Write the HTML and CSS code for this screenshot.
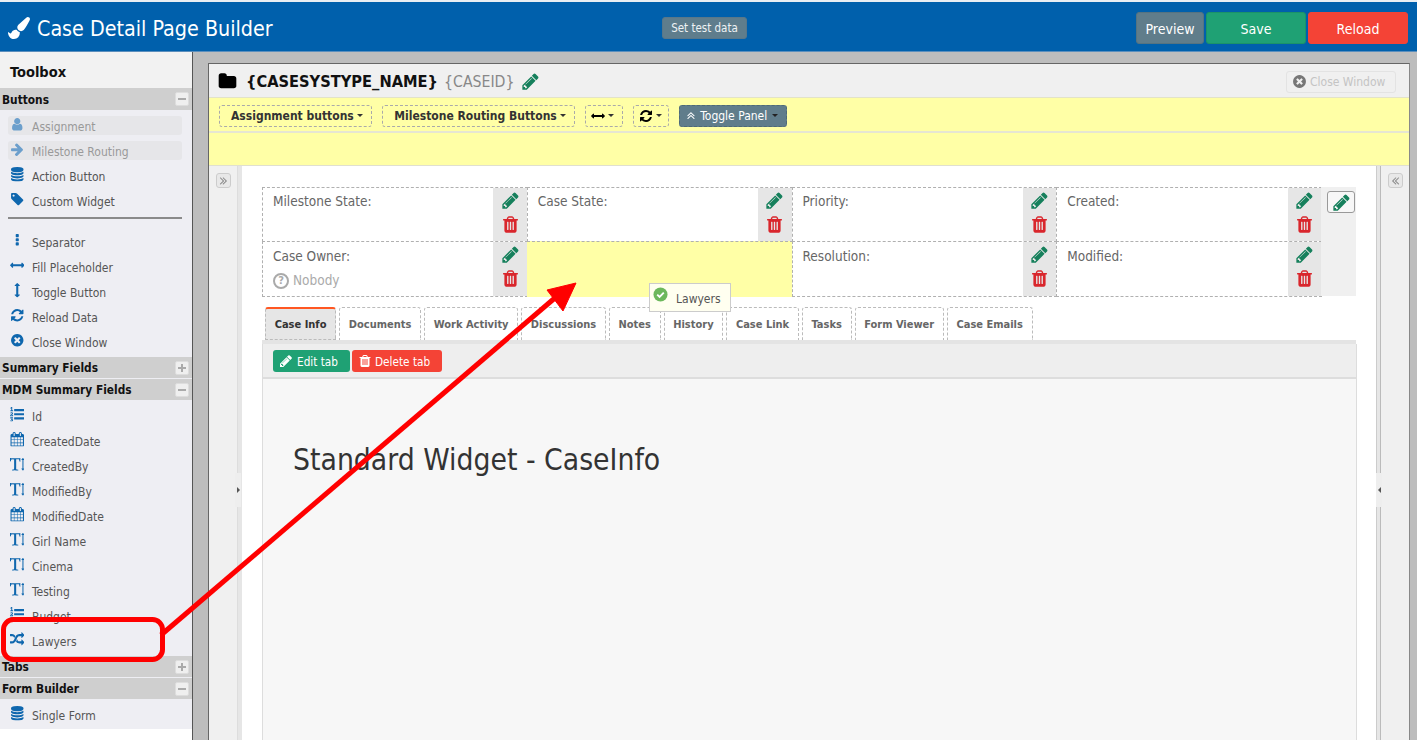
FILE: index.html
```html
<!DOCTYPE html>
<html lang="en">
<head>
<meta charset="utf-8">
<title>Case Detail Page Builder</title>
<link rel="stylesheet" href="styles.css">
</head>
<body>
<svg class="defs" aria-hidden="true">
  <symbol id="i-pencil" viewBox="0 0 1792 1792"><path d="M491 1536l91-91-235-235-91 91v107h128v128h107zm523-928q0-22-22-22-10 0-17 7l-542 542q-7 7-7 17 0 22 22 22 10 0 17-7l542-542q7-7 7-17zm-54-192l416 416-832 832h-416v-416zm683 96q0 53-37 90l-166 166-416-416 166-165q36-38 90-38 53 0 91 38l235 234q37 39 37 91z"/></symbol>
  <symbol id="i-trash" viewBox="0 0 1792 1792"><path d="M704 1376v-704q0-14-9-23t-23-9h-64q-14 0-23 9t-9 23v704q0 14 9 23t23 9h64q14 0 23-9t9-23zm256 0v-704q0-14-9-23t-23-9h-64q-14 0-23 9t-9 23v704q0 14 9 23t23 9h64q14 0 23-9t9-23zm256 0v-704q0-14-9-23t-23-9h-64q-14 0-23 9t-9 23v704q0 14 9 23t23 9h64q14 0 23-9t9-23zm-544-992h448l-48-117q-7-9-17-11h-317q-10 2-17 11zm928 32v64q0 14-9 23t-23 9h-96v948q0 83-47 143.500t-113 60.500h-832q-66 0-113-58.500t-47-141.500v-952h-96q-14 0-23-9t-9-23v-64q0-14 9-23t23-9h309l70-167q15-37 54-63t79-26h320q40 0 79 26t54 63l70 167h309q14 0 23 9t9 23z"/></symbol>
  <symbol id="i-user" viewBox="0 0 1792 1792"><path d="M1536 1399q0 109-62.500 187t-150.500 78h-854q-88 0-150.500-78t-62.500-187q0-85 8.500-160.500t31.500-152 58.500-131 94-89 134.500-34.500q131 128 313 128t313-128q76 0 134.500 34.500t94 89 58.500 131 31.500 152 8.500 160.500zm-256-887q0 159-112.500 271.500t-271.500 112.500-271.500-112.500-112.500-271.500 112.500-271.500 271.500-112.500 271.500 112.500 112.500 271.500z"/></symbol>
  <symbol id="i-arrow" viewBox="0 0 1792 1792"><path d="M1600 960q0 54-37 91l-651 651q-39 37-91 37-51 0-90-37l-75-75q-38-38-38-91t38-91l293-293h-704q-52 0-84.500-37.500t-32.500-90.500v-128q0-53 32.500-90.500t84.500-37.500h704l-293-294q-38-36-38-90t38-90l75-75q38-38 90-38 53 0 91 38l651 651q37 35 37 90z"/></symbol>
  <symbol id="i-db" viewBox="0 0 1792 1792"><path d="M896 768q237 0 443-43t325-127v170q0 69-103 128t-280 93.500-385 34.500-385-34.500-280-93.500-103-128v-170q119 84 325 127t443 43zm0 768q237 0 443-43t325-127v170q0 69-103 128t-280 93.500-385 34.500-385-34.500-280-93.500-103-128v-170q119 84 325 127t443 43zm0-384q237 0 443-43t325-127v170q0 69-103 128t-280 93.500-385 34.500-385-34.500-280-93.500-103-128v-170q119 84 325 127t443 43zm0-1152q208 0 385 34.500t280 93.500 103 128v128q0 69-103 128t-280 93.500-385 34.500-385-34.500-280-93.500-103-128v-128q0-69 103-128t280-93.500 385-34.500z"/></symbol>
  <symbol id="i-tag" viewBox="0 0 1792 1792"><path d="M576 448q0-53-37.500-90.500t-90.500-37.500-90.500 37.500-37.500 90.500 37.500 90.500 90.500 37.500 90.500-37.500 37.500-90.500zm1067 576q0 53-37 90l-491 492q-39 37-91 37-53 0-90-37l-715-716q-38-37-64.500-101t-26.500-117v-416q0-52 38-90t90-38h416q53 0 117 26.500t102 64.500l715 714q37 39 37 91z"/></symbol>
  <symbol id="i-dots" viewBox="0 0 1792 1792"><path d="M1088 1248v192q0 40-28 68t-68 28h-192q-40 0-68-28t-28-68v-192q0-40 28-68t68-28h192q40 0 68 28t28 68zm0-512v192q0 40-28 68t-68 28h-192q-40 0-68-28t-28-68v-192q0-40 28-68t68-28h192q40 0 68 28t28 68zm0-512v192q0 40-28 68t-68 28h-192q-40 0-68-28t-28-68v-192q0-40 28-68t68-28h192q40 0 68 28t28 68z"/></symbol>
  <symbol id="i-h" viewBox="0 0 1792 1792"><path d="M1792 896q0 26-19 45l-256 256q-19 19-45 19t-45-19-19-45v-128h-1024v128q0 26-19 45t-45 19-45-19l-256-256q-19-19-19-45t19-45l256-256q19-19 45-19t45 19 19 45v128h1024v-128q0-26 19-45t45-19 45 19l256 256q19 19 19 45z"/></symbol>
  <symbol id="i-v" viewBox="0 0 1792 1792"><path d="M1216 320q0 26-19 45t-45 19h-128v1024h128q26 0 45 19t19 45-19 45l-256 256q-19 19-45 19t-45-19l-256-256q-19-19-19-45t19-45 45-19h128v-1024h-128q-26 0-45-19t-19-45 19-45l256-256q19-19 45-19t45 19l256 256q19 19 19 45z"/></symbol>
  <symbol id="i-refresh" viewBox="0 0 1792 1792"><path d="M1639 1056q0 5-1 7-64 268-268 434.500t-478 166.500q-146 0-282.500-55t-243.500-157l-129 129q-19 19-45 19t-45-19-19-45v-448q0-26 19-45t45-19h448q26 0 45 19t19 45-19 45l-137 137q71 66 161 102t187 36q134 0 250-65t186-179q11-17 53-117 8-23 30-23h192q13 0 22.500 9.500t9.500 22.500zm25-800v448q0 26-19 45t-45 19h-448q-26 0-45-19t-19-45 19-45l138-138q-148-137-349-137-134 0-250 65t-186 179q-11 17-53 117-8 23-30 23h-199q-13 0-22.500-9.500t-9.500-22.500v-7q65-268 270-434.500t480-166.500q146 0 284 55.500t245 156.500l130-129q19-19 45-19t45 19 19 45z"/></symbol>
  <symbol id="i-close" viewBox="0 0 1792 1792"><path d="M1277 1122q0-26-19-45l-181-181 181-181q19-19 19-45 0-27-19-46l-90-90q-19-19-46-19-26 0-45 19l-181 181-181-181q-19-19-45-19-27 0-46 19l-90 90q-19 19-19 46 0 26 19 45l181 181-181 181q-19 19-19 45 0 27 19 46l90 90q19 19 46 19 26 0 45-19l181-181 181 181q19 19 45 19 27 0 46-19l90-90q19-19 19-46zm387-226q0 209-103 385.500t-279.500 279.500-385.500 103-385.500-103-279.500-279.500-103-385.500 103-385.500 279.500-279.500 385.500-103 385.500 103 279.500 279.500 103 385.500z"/></symbol>
  <symbol id="i-folder" viewBox="0 0 1792 1792"><path d="M1728 608v704q0 92-66 158t-158 66h-1216q-92 0-158-66t-66-158v-960q0-92 66-158t158-66h320q92 0 158 66t66 158v32h672q92 0 158 66t66 158z"/></symbol>
  <symbol id="i-brush" viewBox="0 0 1792 1792"><path d="M1615 0q70 0 122.500 46.500t52.500 116.500q0 63-45 151-332 629-465 752-97 91-218 91-126 0-216.500-92.500t-90.500-219.500q0-128 92-212l638-579q59-54 130-54zm-909 1034q39 76 106.500 130t150.500 76l1 71q4 213-129.500 347t-348.500 134q-123 0-218-46.500t-152.500-127.500-86.500-183-29-220q7 5 41 30t62 44.500 59 36.500 46 17q41 0 55-37 25-66 57.500-112.500t69.500-76 88-47.500 103-25.500 119-12.500z"/></symbol>
  <symbol id="i-random" viewBox="0 0 1792 1792"><path d="M666 481q-60 92-137 273-22-45-37-72.500t-40.500-63.500-51-56.500-63-35-81.500-14.500h-224q-14 0-23-9t-9-23v-192q0-14 9-23t23-9h224q250 0 410 225zm1126 799q0 14-9 23l-320 320q-9 9-23 9-13 0-22.500-9.500t-9.500-22.500v-192q-32 0-85 .5t-81 1-73-1-71-5-64-10.500-63-18.500-58-28.500-59-40-55-53.500-56-69.500q59-93 136-273 22 45 37 72.500t40.500 63.500 51 56.500 63 35 81.500 14.500h256v-192q0-14 9-23t23-9q12 0 24 10l319 319q9 9 9 23zm0-896q0 14-9 23l-320 320q-9 9-23 9-13 0-22.500-9.500t-9.500-22.500v-192h-256q-48 0-87 15t-69 45-51 61.500-45 77.500q-32 62-78 171-29 66-49.500 111t-54 105-64 100-74 83-90 68.500-106.500 42-128 16.500h-224q-14 0-23-9t-9-23v-192q0-14 9-23t23-9h224q48 0 87-15t69-45 51-61.500 45-77.500q32-62 78-171 29-66 49.500-111t54-105 64-100 74-83 90-68.500 106.500-42 128-16.500h256v-192q0-14 9-23t23-9q12 0 24 10l319 319q9 9 9 23z"/></symbol>
  <symbol id="i-cal" viewBox="0 0 1792 1792"><path d="M192 1664h288v-288h-288v288zm352 0h320v-288h-320v288zm-352-352h288v-320h-288v320zm352 0h320v-320h-320v320zm-352-384h288v-288h-288v288zm736 736h320v-288h-320v288zm-384-736h320v-288h-320v288zm768 736h288v-288h-288v288zm-384-352h320v-320h-320v320zm-352-864v-288q0-13-9.500-22.500t-22.500-9.500h-64q-13 0-22.500 9.500t-9.500 22.500v288q0 13 9.500 22.500t22.500 9.500h64q13 0 22.500-9.500t9.500-22.500zm736 864h288v-320h-288v320zm-384-384h320v-288h-320v288zm384 0h288v-288h-288v288zm32-480v-288q0-13-9.500-22.500t-22.500-9.500h-64q-13 0-22.500 9.500t-9.500 22.500v288q0 13 9.500 22.500t22.500 9.500h64q13 0 22.500-9.500t9.500-22.500zm384-64v1280q0 52-38 90t-90 38h-1408q-52 0-90-38t-38-90v-1280q0-52 38-90t90-38h128v-96q0-66 47-113t113-47h64q66 0 113 47t47 113v96h384v-96q0-66 47-113t113-47h64q66 0 113 47t47 113v96h128q52 0 90 38t38 90z"/></symbol>
  <symbol id="i-list" viewBox="0 0 1792 1792"><path d="M381 1620q0 80-54.500 126t-135.500 46q-106 0-172-66l57-88q49 45 106 45 29 0 50.500-14.500t21.500-42.500q0-64-105-56l-26-56q8-10 32.500-43.500t42.500-54 37-38.500v-1q-16 0-48.500 1t-48.500 1v53h-106v-152h333v88l-95 115q51 12 81 49t30 88zm2-627v159h-362q-6-36-6-54 0-51 23.500-93t56.500-68 66-47.500 56.500-43.500 23.500-45q0-25-14.500-38.500t-39.500-13.500q-46 0-81 58l-85-59q24-51 71.500-79.500t105.500-28.500q73 0 123 41.500t50 112.500q0 50-34 91.500t-75 64.500-75.500 50.500-35.500 52.500h127v-60h105zm1409 319v192q0 13-9.500 22.500t-22.500 9.500h-1216q-13 0-22.500-9.500t-9.500-22.500v-192q0-14 9-23t23-9h1216q13 0 22.500 9.500t9.500 22.500zm-1408-899v99h-335v-99h107q0-41 .5-122t.5-121v-12h-2q-8 17-50 54l-71-76 136-127h106v404h108zm1408 387v192q0 13-9.500 22.500t-22.500 9.500h-1216q-13 0-22.500-9.500t-9.500-22.500v-192q0-14 9-23t23-9h1216q13 0 22.500 9.500t9.500 22.500zm0-512v192q0 13-9.500 22.500t-22.500 9.500h-1216q-13 0-22.500-9.500t-9.500-22.500v-192q0-13 9.500-22.500t22.500-9.500h1216q13 0 22.500 9.500t9.500 22.500z"/></symbol>
  <symbol id="i-text" viewBox="0 0 1792 1792"><path d="M1744 1408q33 0 42 18.500t-11 44.500l-126 162q-20 26-49 26t-49-26l-126-162q-20-26-11-44.500t42-18.500h80v-1024h-80q-33 0-42-18.500t11-44.500l126-162q20-26 49-26t49 26l126 162q20 26 11 44.500t-42 18.500h-80v1024h80zm-1663-1279l54 27q12 5 211 5 44 0 132-2t132-2q36 0 107.500.5t107.500.5h293q6 0 21 .5t20.500 0 16-3 17.500-9 15-17.500l42-1q4 0 14 .5t14 .5q2 112 2 336 0 80-5 109-39 14-68 18-25-44-54-128-3-9-11-48t-14.500-73.500-7.500-35.500q-6-8-12-12.500t-15.500-6-13-2.500-18-.5-16.500.5q-17 0-66.500-.5t-74.500-.5-64 2-71 6q-9 81-8 136 0 94 2 388t2 455q0 16-2.500 71.500t0 91.500 12.500 69q40 21 124 42.500t120 37.500q5 40 5 50 0 14-3 29l-34 1q-76 2-218-8t-207-10q-50 0-151 9t-152 9q-3-51-3-52v-9q17-27 61.500-43t98.500-29 78-27q19-42 19-383 0-101-3-303t-3-303v-117q0-2 .5-15.500t.5-25-1-25.500-3-24-5-14q-11-12-162-12-33 0-93 12t-80 26q-19 13-34 72.500t-31.500 111-42.500 53.500q-42-26-56-44v-383z"/></symbol>
  <symbol id="i-dbl" viewBox="0 0 1792 1792"><path d="M979 960q0 13-10 23l-466 466q-10 10-23 10t-23-10l-50-50q-10-10-10-23t10-23l393-393-393-393q-10-10-10-23t10-23l50-50q10-10 23-10t23 10l466 466q10 10 10 23zm384 0q0 13-10 23l-466 466q-10 10-23 10t-23-10l-50-50q-10-10-10-23t10-23l393-393-393-393q-10-10-10-23t10-23l50-50q10-10 23-10t23 10l466 466q10 10 10 23z"/></symbol>
</svg>

<div class="topstrip"></div>
<header class="header">
  <div class="brand">
    <svg class="brand-icon"><use href="#i-brush"/></svg>
    <span>Case Detail Page Builder</span>
  </div>
  <button class="btn-test">Set test data</button>
  <div class="header-actions">
    <button class="hbtn hbtn-preview">Preview</button>
    <button class="hbtn hbtn-save">Save</button>
    <button class="hbtn hbtn-reload">Reload</button>
  </div>
</header>

<div class="workspace">
  <aside class="sidebar">
    <div class="toolbox-title">Toolbox</div>
    <div class="group-head group-first"><span>Buttons</span><i class="tog tog-minus"></i></div>
    <ul class="items">
      <li class="item item-off"><svg class="ic"><use href="#i-user"/></svg>Assignment</li>
      <li class="item item-off"><svg class="ic"><use href="#i-arrow"/></svg>Milestone Routing</li>
      <li class="item"><svg class="ic"><use href="#i-db"/></svg>Action Button</li>
      <li class="item"><svg class="ic"><use href="#i-tag"/></svg>Custom Widget</li>
      <li class="divider"></li>
      <li class="item"><svg class="ic"><use href="#i-dots"/></svg>Separator</li>
      <li class="item"><svg class="ic"><use href="#i-h"/></svg>Fill Placeholder</li>
      <li class="item"><svg class="ic"><use href="#i-v"/></svg>Toggle Button</li>
      <li class="item"><svg class="ic"><use href="#i-refresh"/></svg>Reload Data</li>
      <li class="item"><svg class="ic"><use href="#i-close"/></svg>Close Window</li>
    </ul>
    <div class="group-head"><span>Summary Fields</span><i class="tog tog-plus"></i></div>
    <div class="group-head group-next"><span>MDM Summary Fields</span><i class="tog tog-minus"></i></div>
    <ul class="items">
      <li class="item"><svg class="ic"><use href="#i-list"/></svg>Id</li>
      <li class="item"><svg class="ic"><use href="#i-cal"/></svg>CreatedDate</li>
      <li class="item"><svg class="ic"><use href="#i-text"/></svg>CreatedBy</li>
      <li class="item"><svg class="ic"><use href="#i-text"/></svg>ModifiedBy</li>
      <li class="item"><svg class="ic"><use href="#i-cal"/></svg>ModifiedDate</li>
      <li class="item"><svg class="ic"><use href="#i-text"/></svg>Girl Name</li>
      <li class="item"><svg class="ic"><use href="#i-text"/></svg>Cinema</li>
      <li class="item"><svg class="ic"><use href="#i-text"/></svg>Testing</li>
      <li class="item"><svg class="ic"><use href="#i-list"/></svg>Budget</li>
      <li class="item"><svg class="ic"><use href="#i-random"/></svg>Lawyers</li>
    </ul>
    <div class="group-head"><span>Tabs</span><i class="tog tog-plus"></i></div>
    <div class="group-head group-next"><span>Form Builder</span><i class="tog tog-minus"></i></div>
    <ul class="items">
      <li class="item"><svg class="ic"><use href="#i-db"/></svg>Single Form</li>
    </ul>
  </aside>

  <main class="stage">
    <section class="window">
      <div class="win-head">
        <svg class="win-folder"><use href="#i-folder"/></svg>
        <strong class="win-title">{CASESYSTYPE_NAME}</strong>
        <span class="win-id">{CASEID}</span>
        <svg class="win-pen"><use href="#i-pencil"/></svg>
        <button class="btn-close"><svg class="btn-close-ic"><use href="#i-close"/></svg>Close Window</button>
      </div>
      <div class="bar-a">
        <span class="dd">Assignment buttons<b class="caret"></b></span>
        <span class="dd">Milestone Routing Buttons<b class="caret"></b></span>
        <span class="dd dd-ic"><svg class="dd-svg"><use href="#i-h"/></svg><b class="caret"></b></span>
        <span class="dd dd-ic dd-refresh"><svg class="dd-svg"><use href="#i-refresh"/></svg><b class="caret"></b></span>
        <span class="dd-toggle"><svg class="dbl-up"><use href="#i-dbl"/></svg>Toggle Panel<b class="caret caret-dark"></b></span>
      </div>
      <div class="bar-b"></div>
      <div class="body-row">
        <div class="side-l"><span class="mini"><svg class="mini-ic"><use href="#i-dbl"/></svg></span></div>
        <div class="split split-l"><i class="grip grip-l"></i></div>
        <div class="center">
          <div class="fields">
            <div class="field"><div class="f-main"><label>Milestone State:</label></div><div class="f-act"><svg class="pen"><use href="#i-pencil"/></svg><svg class="bin"><use href="#i-trash"/></svg></div></div>
            <div class="field"><div class="f-main"><label>Case State:</label></div><div class="f-act"><svg class="pen"><use href="#i-pencil"/></svg><svg class="bin"><use href="#i-trash"/></svg></div></div>
            <div class="field"><div class="f-main"><label>Priority:</label></div><div class="f-act"><svg class="pen"><use href="#i-pencil"/></svg><svg class="bin"><use href="#i-trash"/></svg></div></div>
            <div class="field"><div class="f-main"><label>Created:</label></div><div class="f-act"><svg class="pen"><use href="#i-pencil"/></svg><svg class="bin"><use href="#i-trash"/></svg></div></div>
            <div class="f-extra"><span class="edit-btn"><svg class="pen"><use href="#i-pencil"/></svg></span></div>
            <div class="field"><div class="f-main"><label>Case Owner:</label><div class="owner"><span class="q">?</span>Nobody</div></div><div class="f-act"><svg class="pen"><use href="#i-pencil"/></svg><svg class="bin"><use href="#i-trash"/></svg></div></div>
            <div class="field field-drop"></div>
            <div class="field"><div class="f-main"><label>Resolution:</label></div><div class="f-act"><svg class="pen"><use href="#i-pencil"/></svg><svg class="bin"><use href="#i-trash"/></svg></div></div>
            <div class="field"><div class="f-main"><label>Modified:</label></div><div class="f-act"><svg class="pen"><use href="#i-pencil"/></svg><svg class="bin"><use href="#i-trash"/></svg></div></div>
            <div class="f-extra"></div>
          </div>
          <nav class="tabs">
            <a class="tab tab-on">Case Info</a>
            <a class="tab">Documents</a>
            <a class="tab">Work Activity</a>
            <a class="tab">Discussions</a>
            <a class="tab">Notes</a>
            <a class="tab">History</a>
            <a class="tab">Case Link</a>
            <a class="tab">Tasks</a>
            <a class="tab">Form Viewer</a>
            <a class="tab">Case Emails</a>
          </nav>
          <div class="panel">
            <div class="panel-bar">
              <button class="pbtn pbtn-edit"><svg class="pbtn-ic"><use href="#i-pencil"/></svg>Edit tab</button>
              <button class="pbtn pbtn-del"><svg class="pbtn-ic"><use href="#i-trash"/></svg>Delete tab</button>
            </div>
            <div class="panel-body"><h1>Standard Widget - CaseInfo</h1></div>
          </div>
        </div>
        <div class="split split-r"><i class="grip grip-r"></i></div>
        <div class="side-r"><span class="mini"><svg class="mini-ic flip"><use href="#i-dbl"/></svg></span></div>
      </div>
    </section>
  </main>
</div>

<div class="drag-ghost">
  <svg class="ghost-ok" viewBox="0 0 16 16"><circle cx="8" cy="8" r="7.500"/><path d="M4.500 8.200l2.500 2.400 4.500-4.600"/></svg>
  <span>Lawyers</span>
</div>

<svg class="annot" viewBox="0 0 1417 740" aria-hidden="true">
  <rect class="annot-box" x="3.500" y="619.500" width="159" height="40" rx="10"/>
  <path class="annot-line" d="M161 635L556 297"/>
  <path class="annot-head" d="M576 283L547 290L563 311Z"/>
</svg>
</body>
</html>
```

FILE: styles.css
```css
* { box-sizing: border-box; }
html, body { margin: 0; padding: 0; }
body {
  width: 1417px;
  height: 740px;
  overflow: hidden;
  position: relative;
  background: #fff;
  color: #555;
  font-family: "DejaVu Sans Condensed", "DejaVu Sans", sans-serif;
  font-stretch: condensed;
  font-size: 12px;
}
button { font: inherit; font-stretch: condensed; cursor: pointer; }
ul { list-style: none; margin: 0; padding: 0; }
svg { fill: currentColor; display: block; flex: none; }
.defs { width: 0; height: 0; position: absolute; }

.topstrip { height: 2px; background: #e9eef3; }
.header {
  height: 50px;
  background: #0060ac;
  border-bottom: 1px solid #5c8fbd;
  display: flex;
  align-items: center;
  padding-top: 3px;
  color: #fff;
}
.brand { display: flex; align-items: center; padding-left: 8px; font-size: 21.300px; gap: 7px; width: 662px; }
.brand-icon { width: 22px; height: 22px; }
.btn-test {
  width: 85px; height: 22px; padding: 0;
  background: #5f7d8c; border: 1px solid #58778a; border-radius: 3px;
  color: #eef2f4; font-size: 11.500px;
}
.header-actions { margin-left: auto; display: flex; gap: 2px; padding-right: 9px; }
.hbtn { height: 32px; border-radius: 3px; font-size: 14px; color: #fff; padding: 2px 0 0; border: 1px solid transparent; }
.hbtn-preview { width: 68px; background: #607d8b; border-color: #557381; }
.hbtn-save { width: 100px; background: #1fa174; border-color: #1b9368; }
.hbtn-reload { width: 100px; background: #f44336; border-color: #f44336; }

.workspace { display: flex; height: 688px; }
.sidebar { width: 193px; flex: none; border-right: 1px solid #555; background: linear-gradient(#eeeef3 677px, #fff 677px); }
.toolbox-title { height: 36px; background: #f2f2f2; color: #111; font-size: 14.500px; font-weight: bold; padding: 12px 0 0 10px; line-height: 17px; }
.group-head {
  height: 21px; background: #cfcfcf; color: #111;
  font-size: 11.800px; font-weight: bold; line-height: 21px;
  padding-left: 2px;
  display: flex; justify-content: space-between; align-items: center;
}
.group-first { height: 22px; }
.group-next { margin-top: 1px; }
.group-head span { padding-top: 1px; }
.group-first span { padding-top: 2px; }
.tog {
  width: 14px; height: 14px; margin-right: 3px;
  background: #efefef; border: 1px solid #ddd; border-radius: 2px; position: relative;
}
.tog::before { content: ""; position: absolute; left: 2px; right: 2px; top: 5px; height: 2px; background: #aaa; }
.tog-plus::after { content: ""; position: absolute; top: 2px; bottom: 2px; left: 5px; width: 2px; background: #aaa; }

.items { padding: 4px 10px 2px 8px; }
.item { height: 25px; display: flex; align-items: center; gap: 8px; padding: 0 0 0 1.500px; color: #555; font-size: 12px; }
.ic { width: 14.500px; height: 14.500px; color: #0f67ae; margin-bottom: 4px; }
.item-off { position: relative; z-index: 0; color: #999; }
.item-off::before { content: ""; position: absolute; z-index: -1; left: 0; right: 0; top: 2px; height: 19px; background: #e6e6e9; border-radius: 3px; }
.item-off .ic { color: #6c9fcc; }
.divider { height: 2px; background: #8a8a8a; margin: 3px 0 11px; }

.stage { flex: 1; background: #bdbdbd; padding: 11px 7px 0 15px; min-width: 0; }
.window { height: 100%; background: #fff; border-left: 1px solid #666; border-right: 1px solid #888; border-top: 1px solid #666; display: flex; flex-direction: column; }
.win-head { height: 33px; background: #f0f0f0; display: flex; align-items: center; padding: 2px 0 0 9px; flex: none; }
.win-folder { width: 19px; height: 19px; color: #000; margin-right: 9px; }
.win-title { font-size: 16.300px; color: #111; margin-right: 6px; }
.win-id { font-size: 15.700px; color: #888; margin-right: 7px; }
.win-pen { width: 19px; height: 19px; color: #16805c; }
.btn-close {
  margin-left: auto; margin-right: 13px; width: 110px; height: 22px; padding: 0 0 0 5px;
  display: flex; align-items: center; gap: 3px;
  background: #f0f0f0; border: 1px solid #e3e3e3; border-radius: 3px; color: #c4c4c4; font-size: 12px;
}
.btn-close-ic { width: 15px; height: 15px; color: #777; }
.bar-a { height: 34px; background: #ffffa6; border-top: 1px solid #e3e3c8; display: flex; align-items: center; gap: 10px; padding: 2px 0 0 10px; flex: none; }
.dd {
  height: 22px; padding: 0 8.500px 0 11px; display: flex; align-items: center; gap: 3px;
  border: 1px dashed #aaa; border-radius: 3px;
  font-size: 12px; font-weight: bold; color: #333;
}
.dd-ic { padding: 0 8px 0 5px; color: #000; }
.dd-refresh { padding-right: 6px; }
.dd-svg { width: 14px; height: 14px; }
.caret { width: 0; height: 0; border: 3px solid transparent; border-top-color: #333; border-bottom: 0; }
.dd-toggle {
  height: 22px; padding: 0 8px 0 4px; display: flex; align-items: center; gap: 3px;
  background: #607d8b; border: 1px dashed #4e6a77; border-radius: 3px; color: #fff;
}
.dbl-up { width: 13px; height: 13px; transform: rotate(-90deg); }
.caret-dark { border-top-color: #222; margin-left: 2px; }
.bar-b { height: 35px; background: #ffffa6; border-top: 2px solid #e6e6d2; border-bottom: 1px solid #e0e0d0; flex: none; }

.body-row { flex: 1; display: flex; min-height: 0; }
.side-l, .side-r { background: #f0f0f0; flex: none; width: 28px; padding-top: 7px; display: flex; justify-content: center; align-items: flex-start; }
.split { width: 5px; flex: none; background: #e6e6e6; position: relative; border-left: 1px solid #ddd; }
.split-r { border-left: 1px solid #ccc; border-right: 1px solid #bbb; }
.mini {
  width: 15px; height: 15px; background: #e8e8e8; border: 1px solid #ccc; border-radius: 3px;
  display: flex; align-items: center; justify-content: center; color: #8a8a8a;
}
.mini-ic { width: 13px; height: 13px; }
.flip { transform: scaleX(-1); }
.grip { position: absolute; top: 307px; width: 6px; height: 34px; background: #eee; display: flex; }
.grip-l { left: -3px; }
.grip-r { right: -2px; }
.grip-l::before { content: ""; margin: auto; border: 3px solid transparent; border-left-color: #555; border-right: 0; }
.grip-r::before { content: ""; margin: auto; border: 3px solid transparent; border-right-color: #555; border-left: 0; }

.center { flex: 1; min-width: 0; padding: 21px 20px 0 20px; display: flex; flex-direction: column; }
.fields { display: grid; grid-template-columns: repeat(4, 264.750px) 35px; grid-template-rows: 54px 55px; flex: none; }
.field { display: flex; border: 1px dashed #b0b0b0; margin: 0 -1px -1px 0; background: #fff; }
.f-main { flex: 1; padding: 5px 10px; font-size: 13.500px; color: #666; line-height: 17px; }
.field:nth-child(n+6) .f-main { padding-top: 6px; }
.f-act { width: 33.500px; background: #e6e6e6; display: flex; flex-direction: column; align-items: center; gap: 5px; padding-top: 3px; }
.pen { width: 19px; height: 19px; color: #16805c; }
.bin { width: 19px; height: 19px; color: #d9262c; }
.owner { display: flex; align-items: center; gap: 4px; margin-top: 7px; color: #aaa; font-size: 13.500px; }
.q { width: 16px; height: 16px; border: 2px solid #aaa; border-radius: 50%; font-size: 11px; line-height: 12px; text-align: center; font-weight: bold; color: #aaa; }
.field-drop { background: #ffffa6; border-left: 0; border-right: 0; border-bottom: 0; }
.f-extra { background: #f0f0f0; padding: 4px 0 0 6px; }
.edit-btn { width: 28px; height: 22px; display: flex; align-items: center; justify-content: center; background: #f7f7f7; border: 1px solid #999; border-radius: 3px; }

.tabs { display: flex; gap: 3px; padding-left: 3px; margin-top: 11px; height: 37px; border-bottom: 4px solid #e4e4e4; flex: none; }
.tab {
  padding: 1px 8.650px 0; height: 33px; display: flex; align-items: center;
  border: 1px dashed #bbb; border-bottom: 0; border-radius: 3px 3px 0 0;
  font-size: 11px; font-weight: bold; color: #666;
}
.tab-on { background: #e6e6e6; color: #333; border-top: 2px solid #ff5722; border-bottom: 1px dashed #bbb; }
.panel { flex: 1; border-left: 1px solid #ddd; border-right: 1px solid #ddd; width: 1095px; display: flex; flex-direction: column; min-height: 0; }
.panel-bar { height: 35px; background: #eee; border-bottom: 2px solid #ddd; display: flex; align-items: center; gap: 2px; padding: 0 0 0 10px; flex: none; }
.pbtn { height: 22px; border-radius: 3px; border: 1px solid transparent; color: #fff; padding: 2px 0 0 5px; font-size: 11.700px; display: flex; align-items: center; gap: 4px; }
.pbtn-ic { width: 14px; height: 14px; margin-top: -2px; }
.pbtn-edit { width: 77px; background: #1fa174; }
.pbtn-del { width: 90px; background: #f44336; gap: 3px; }
.panel-body { flex: 1; background: #f7f7f7; padding: 63px 0 0 30px; }
.panel-body h1 { margin: 0; font-size: 29.750px; font-weight: normal; color: #333; line-height: 36px; }

.drag-ghost {
  position: absolute; left: 649px; top: 283px; width: 82px; height: 29px;
  background: #fffff0; border: 1px solid #ccc; color: #555; font-size: 12px;
}
.drag-ghost span { position: absolute; left: 26px; top: 8px; }
.ghost-ok { position: absolute; left: 3px; top: 3px; width: 15px; height: 15px; }
.ghost-ok circle { fill: #6cb85c; }
.ghost-ok path { fill: none; stroke: #fff; stroke-width: 2; }

.annot { position: absolute; left: 0; top: 0; width: 1417px; height: 740px; pointer-events: none; }
.annot-box { fill: none; stroke: #f00; stroke-width: 5; }
.annot-line { fill: none; stroke: #f00; stroke-width: 5; }
.annot-head { fill: #f00; stroke: #f00; stroke-width: 1; stroke-linejoin: round; }
```
